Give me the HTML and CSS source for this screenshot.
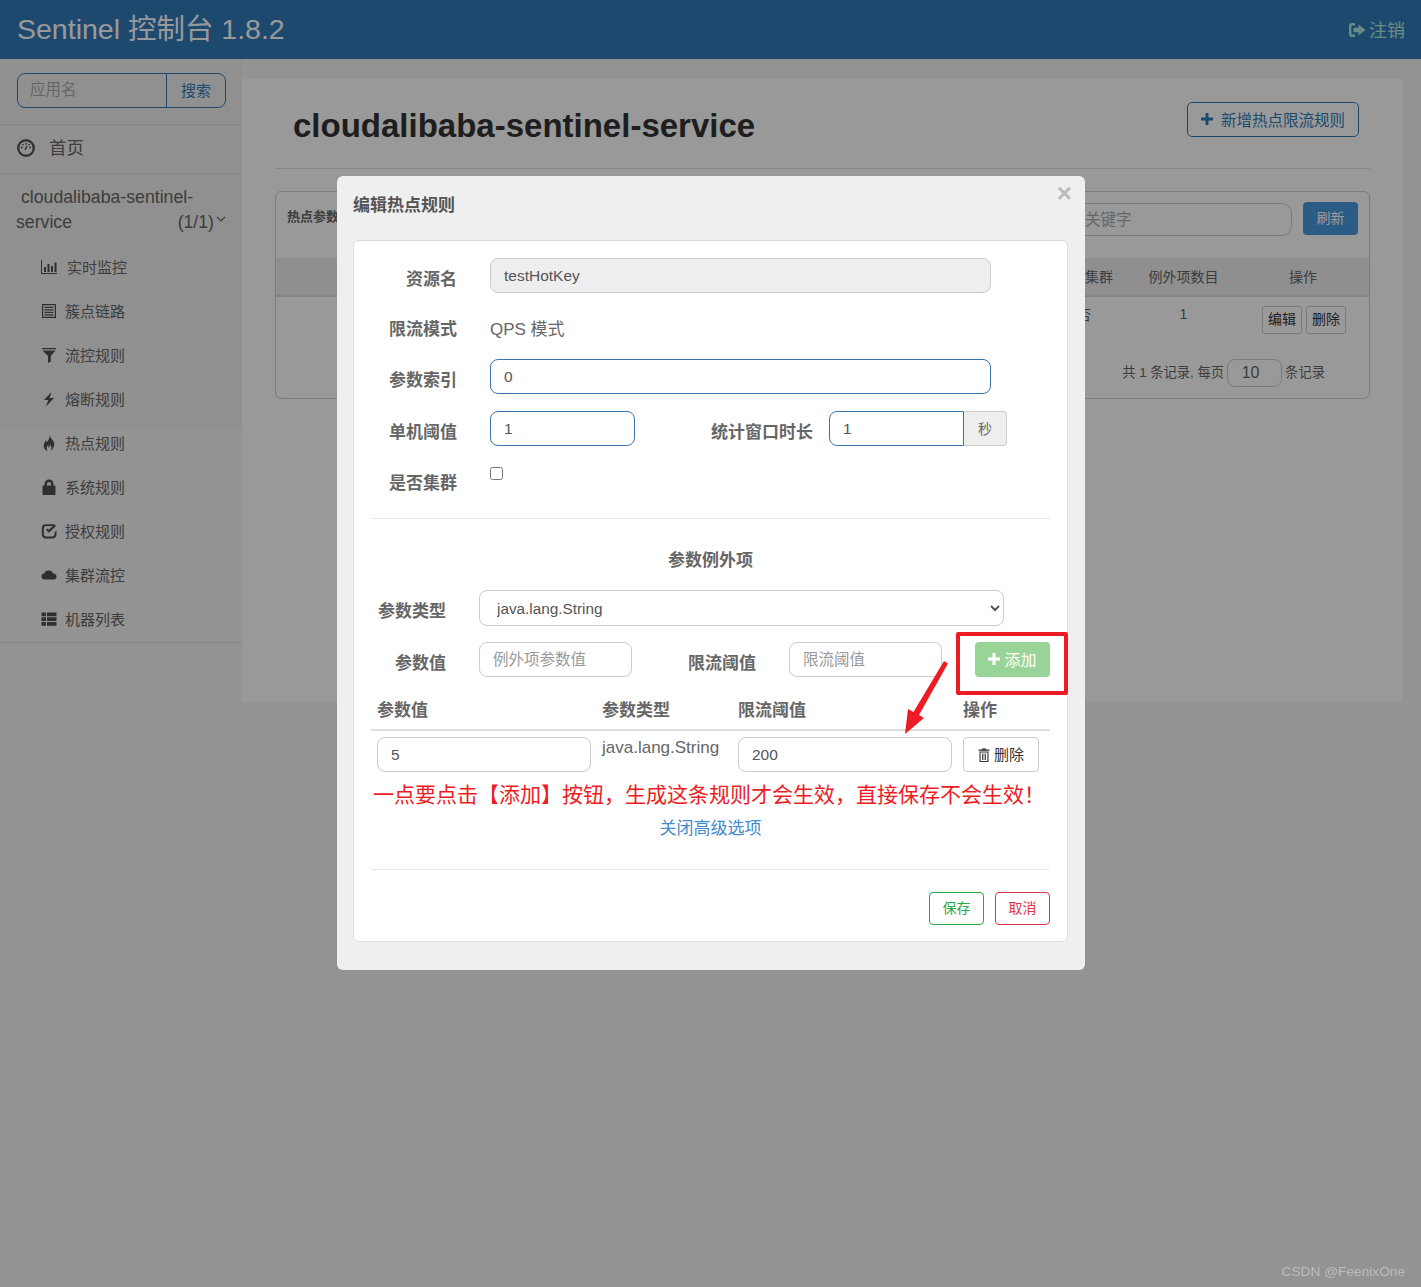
FILE: index.html
```html
<!DOCTYPE html>
<html lang="zh">
<head>
<meta charset="utf-8">
<title>Sentinel 控制台</title>
<link rel="stylesheet" href="styles.css">
</head>
<body>
<header class="topbar">
  <div class="brand">Sentinel 控制台 1.8.2</div>
  <a class="logout"><svg class="ico-logout" viewBox="0 0 18 16"><path d="M7 1H4a3 3 0 0 0-3 3v8a3 3 0 0 0 3 3h3v-2.400H4.400a1 1 0 0 1-1-1V4.400a1 1 0 0 1 1-1H7z"/><path d="M10.500 2.500 17.500 8l-7 5.500V10.300H5.500V5.700h5z"/></svg>注销</a>
</header>
<div class="layout">
  <aside class="sidebar">
    <div class="side-search">
      <div class="search-group"><input class="search-input" placeholder="应用名"><span class="search-btn">搜索</span></div>
    </div>
    <div class="side-home">
      <svg class="ico-home" viewBox="0 0 18 18"><circle cx="9" cy="9" r="7.800" fill="none" stroke="currentColor" stroke-width="2.400"/><path d="M4 8.500h1.800M12.200 8.500H14M9 4v1.800M5.500 5.200l1 1M12.500 5.200l-1 1M8.200 11l1.600-4" stroke="currentColor" stroke-width="1.500" fill="none"/></svg>
      <span class="home-text">首页</span>
    </div>
    <div class="side-app">
      <div class="app-line1">cloudalibaba-sentinel-</div>
      <div class="app-line2"><span>service</span><span class="app-count">(1/1)<svg class="ico-chev" viewBox="0 0 10 6"><path d="M1 1l4 4 4-4" fill="none" stroke="currentColor" stroke-width="1.200"/></svg></span></div>
    </div>
    <ul class="side-menu">
      <li><svg class="ico" viewBox="0 0 16 16"><path d="M0 1h1v13h16v1H0z"/><path d="M3 8h2v5H3zM6.500 5h2v8h-2zM10 7h2v6h-2zM13.500 3.500h2V13h-2z"/></svg><span class="lbl-first">实时监控</span></li>
      <li><svg class="ico" viewBox="0 0 16 16"><path fill-rule="evenodd" d="M1 1h14v14H1zM2.200 2.200v11.600h11.600V2.200z"/><path d="M3.500 3.800h9v1.300h-9zM3.500 6.300h9v1.300h-9zM3.500 8.800h9v1.300h-9zM3.500 11.200h9v1.300h-9z"/></svg><span>簇点链路</span></li>
      <li><svg class="ico" viewBox="0 0 16 16"><path d="M1 1h14v1.200H1zM1.500 3.500h13L9.800 9v5.500L7 16V9z"/></svg><span>流控规则</span></li>
      <li><svg class="ico" viewBox="0 0 16 16"><path d="M10.500 1 3 9h4.300L5 15.500 13 7H8.500z"/></svg><span>熔断规则</span></li>
      <li><svg class="ico" viewBox="0 0 16 16"><path d="M8.500 0c.5 3 3.500 4.500 4.500 7.500.8 2.800-.5 6.500-3.500 8.500 1.500-2.500 1.300-4.500-.3-6.500-.2 1.800-1 2.600-1.700 3.300-.5-1-.3-2 .3-3.300C6.200 10.500 5 12.500 6.500 16 3.500 14.500 2 12 3 9c.7-2 1.500-2.500 2-4 .5.800.7 1.500.7 2.300C7.500 5.500 9 3 8.500 0z"/></svg><span>热点规则</span></li>
      <li><svg class="ico" viewBox="0 0 16 16"><path fill-rule="evenodd" d="M3.500 6.500V5a4.500 4.500 0 0 1 9 0v1.500h1a1 1 0 0 1 1 1V15a1 1 0 0 1-1 1h-11a1 1 0 0 1-1-1V7.500a1 1 0 0 1 1-1zM6 6.500h4V5a2 2 0 0 0-4 0z"/></svg><span>系统规则</span></li>
      <li><svg class="ico" viewBox="0 0 16 16"><path d="M13.500 9.500V11a2.500 2.500 0 0 1-2.500 2.500H5A2.500 2.500 0 0 1 2.800 11V5A2.500 2.500 0 0 1 5 3h7L14 1.200H5A4 4 0 0 0 .8 5v6A4 4 0 0 0 5 15.500h6a4 4 0 0 0 4.500-4V7.500z"/><path d="M5 7 7.800 9.800 15 3 13.500 1.500 7.800 6.800 6.500 5.500z"/></svg><span>授权规则</span></li>
      <li><svg class="ico" viewBox="0 0 16 16"><path d="M3.500 12.500A3 3 0 0 1 .5 9.500a3 3 0 0 1 2.800-2.900A4.300 4.300 0 0 1 8 3.500a4.200 4.200 0 0 1 4 3A3 3 0 0 1 15.500 9.500a3 3 0 0 1-3 3z"/></svg><span>集群流控</span></li>
      <li><svg class="ico" viewBox="0 0 16 16"><path d="M.5 1.500h4.500v3.700H.5zM6 1.500h9.500v3.700H6zM.5 6.200h4.500v3.700H.5zM6 6.200h9.500v3.700H6zM.5 11h4.500v3.700H.5zM6 11h9.500v3.700H6z"/></svg><span>机器列表</span></li>
    </ul>
  </aside>
  <main class="main">
    <div class="page-head">
      <h1 class="page-title">cloudalibaba-sentinel-service</h1>
      <a class="btn-outline-primary"><svg class="ico-plus" viewBox="0 0 12 12"><path d="M4.500 0h3v4.500H12v3H7.500V12h-3V7.500H0v-3h4.500z"/></svg>新增热点限流规则</a>
    </div>
    <section class="rule-card">
      <div class="rule-top">
        <strong class="rule-title">热点参数规则</strong>
        <input class="rule-search" placeholder="关键字">
        <a class="btn-refresh">刷新</a>
      </div>
      <div class="rule-grid rule-head">
        <span></span><span>集群</span><span>例外项数目</span><span>操作</span>
      </div>
      <div class="rule-grid rule-row">
        <span></span><span class="cell-no">否</span><span class="cell-num">1</span>
        <span class="cell-ops"><a class="btn-mini">编辑</a><a class="btn-mini">删除</a></span>
      </div>
      <div class="rule-pager">
        <span>共 1 条记录, 每页</span><input class="pager-input" value="10"><span>条记录</span>
      </div>
    </section>
  </main>
</div>

<div class="backdrop"></div>

<div class="modal">
  <button class="modal-close">×</button>
  <h3 class="modal-title">编辑热点规则</h3>
  <div class="modal-card">
    <form class="form">
      <div class="row">
        <label class="lbl">资源名</label>
        <input class="fc fc-wide fc-disabled" value="testHotKey" disabled>
      </div>
      <div class="row row-static">
        <label class="lbl">限流模式</label>
        <span class="static">QPS 模式</span>
      </div>
      <div class="row row-index">
        <label class="lbl">参数索引</label>
        <input class="fc fc-wide fc-focus" value="0">
      </div>
      <div class="row">
        <label class="lbl">单机阈值</label>
        <input class="fc fc-short fc-focus" value="1">
        <label class="lbl lbl-window">统计窗口时长</label>
        <div class="input-group"><input class="fc fc-addon fc-focus" value="1"><span class="addon">秒</span></div>
      </div>
      <div class="row row-check">
        <label class="lbl">是否集群</label>
        <input class="check" type="checkbox">
      </div>
      <hr class="divider">
      <div class="section-title">参数例外项</div>
      <div class="row row-sel">
        <label class="lbl lbl-sm">参数类型</label>
        <select class="sel"><option>java.lang.String</option></select>
      </div>
      <div class="row row-add">
        <label class="lbl lbl-sm">参数值</label>
        <input class="fc fc-param" placeholder="例外项参数值">
        <label class="lbl lbl-limit">限流阈值</label>
        <input class="fc fc-param" placeholder="限流阈值">
        <a class="btn-add"><svg class="ico-plus-w" viewBox="0 0 12 12"><path d="M4.500 0h3v4.500H12v3H7.500V12h-3V7.500H0v-3h4.500z"/></svg>添加</a>
      </div>
      <div class="ex-grid ex-head"><span>参数值</span><span>参数类型</span><span>限流阈值</span><span>操作</span></div>
      <div class="ex-grid ex-row">
        <input class="fc fc-cell" value="5">
        <span class="ex-type">java.lang.String</span>
        <input class="fc fc-cell" value="200">
        <a class="btn-del"><svg class="ico-trash" viewBox="0 0 12 14"><path d="M4 1.500V.6h4v.9h3.500v1.200H.5V1.500zM1.500 3.500h9V14h-9zM2.600 4.600v8.300h6.800V4.600z" fill-rule="evenodd"/><path d="M4 5.500h.8v6.500H4zM5.600 5.500h.8v6.500h-.8zM7.200 5.500h.8v6.500h-.8z"/></svg>删除</a>
      </div>
      <p class="note">一点要点击【添加】按钮，生成这条规则才会生效，直接保存不会生效！</p>
      <a class="toggle">关闭高级选项</a>
      <hr class="divider divider-foot">
      <div class="foot">
        <a class="btn-save">保存</a>
        <a class="btn-cancel">取消</a>
      </div>
    </form>
  </div>
</div>

<div class="mark-box"></div>
<svg class="mark-arrow" viewBox="0 0 50 80"><path d="M42 2 46 4.500 17 56 22 59 3 75 6 50 11.500 53z"/></svg>
<div class="watermark">CSDN @FeenixOne</div>
</body>
</html>
```

FILE: styles.css
```css
* { box-sizing: border-box; }
html, body { margin: 0; padding: 0; height: 1287px; overflow: hidden; }
body {
  background: #f5f5f5;
  color: #666;
  font-family: "Liberation Sans", "Noto Sans CJK SC", sans-serif;
  font-size: 14px;
}
input, select, button { font-family: inherit; }
a { text-decoration: none; }
ul { list-style: none; margin: 0; padding: 0; }

/* top bar */
.topbar {
  height: 59px;
  background: #327bb9;
  display: flex;
  align-items: center;
  justify-content: space-between;
  padding: 0 16px 0 17px;
}
.brand { color: #fff; font-size: 28.500px; position: relative; top: -3px; }
.logout { color: #aee8dc; font-size: 18px; display: flex; align-items: center; position: relative; top: -1px; }
.ico-logout { width: 18px; height: 16px; fill: #aee8dc; margin-right: 3px; position: relative; top: 1px; }

/* layout */
.layout { display: flex; align-items: flex-start; }
.sidebar { width: 242px; flex: none; background: linear-gradient(#f1f1f1 370px, #f5f5f5 370px); }
.side-search { height: 66px; padding: 14px 16px 0 17px; border-bottom: 1px solid #e2e2e2; }
.search-group {
  display: flex; height: 35px;
  border: 1px solid #327bb9; border-radius: 8px; overflow: hidden;
}
.search-input {
  flex: 1; min-width: 0; border: 0; outline: 0; background: transparent;
  padding: 0 12px 1px; font-size: 15.500px; color: #666;
}
.search-input::placeholder { color: #aaa; }
.search-btn {
  width: 59px; border-left: 1px solid #327bb9; color: #327bb9; padding-bottom: 2px;
  font-size: 15px; display: flex; align-items: center; justify-content: center;
}
.side-home {
  height: 49px; display: flex; align-items: center; padding-left: 17px;
  font-size: 17.500px; border-bottom: 1px solid #e2e2e2; color: #666;
}
.home-text { padding-bottom: 5px; }
.ico-home { width: 18px; height: 18px; margin-right: 14px; color: #555; position: relative; top: -1px; }
.side-app { height: 71px; padding: 11px 16px 0; font-size: 17.700px; line-height: 25px; color: #666; }
.app-line1 { padding-left: 5px; }
.app-line2 { display: flex; justify-content: space-between; }
.app-count { display: flex; align-items: center; }
.ico-chev { width: 10px; height: 6px; margin-left: 2px; margin-top: -8px; }
.side-menu { border-bottom: 1px solid #e2e2e2; padding-bottom: 1px; }
.side-menu li { height: 44px; display: flex; align-items: center; padding-left: 41px; font-size: 15px; color: #666; }
.side-menu li span { margin-left: 8px; padding-bottom: 2px; }
.side-menu li .lbl-first { margin-left: 10px; }
.ico { width: 16px; height: 16px; fill: #4f4f4f; flex: none; }

/* main */
.main {
  width: 1161px; height: 623px; margin-top: 20px;
  background: #fff; padding: 0 33px;
}
.page-head {
  height: 90px; border-bottom: 1px solid #e2e2e2;
  display: flex; align-items: flex-start; justify-content: space-between;
  padding: 23px 11px 0 18px;
}
.page-title { margin: 1px 0 0; font-size: 33px; line-height: 46px; color: #333; font-weight: 700; }
.btn-outline-primary {
  width: 172px; height: 35px; border: 1px solid #327bb9; border-radius: 5px; padding-bottom: 1px;
  display: flex; align-items: center; justify-content: center;
  color: #327bb9; font-size: 15.500px;
}
.ico-plus { width: 12px; height: 12px; fill: #327bb9; margin-right: 8px; }
.rule-card {
  margin-top: 22px; height: 208px; border: 1px solid #d0d0d0; border-radius: 6px;
}
.rule-top { height: 66px; display: flex; align-items: flex-start; padding: 10px 11px 0; }
.rule-title { font-size: 13px; margin-top: 4px; color: #666; }
.rule-search {
  margin-left: auto; width: 221px; height: 33px; margin-top: 1px;
  border: 1px solid #ccc; border-radius: 10px; outline: 0; background: transparent;
  font-size: 15.500px; padding: 0 12px 0 13px;
}
.rule-search::placeholder { color: #aaa; }
.btn-refresh {
  width: 55px; height: 33px; margin-left: 11px; background: #499ae0; color: #fff; padding-bottom: 3px;
  border-radius: 4px; font-size: 14px;
  display: flex; align-items: center; justify-content: center;
}
.rule-grid { display: grid; grid-template-columns: 1fr 62px 107px 132px; text-align: center; }
.rule-head {
  height: 39px; background: #eee; border-bottom: 2px solid #ddd; align-items: center; color: #666; padding-bottom: 2px;
}
.rule-row { height: 55px; padding-top: 9px; align-items: start; color: #666; }
.cell-no { padding-right: 30px; margin-top: -2px; }
.cell-ops { display: flex; gap: 4px; padding-left: 25px; }
.btn-mini {
  height: 28px; padding: 0 5px 4px; border: 1px solid #ccc; border-radius: 3px; color: #333;
  font-size: 14px; display: flex; align-items: center; margin-top: 0;
}
.cell-num { margin-top: 0; }
.rule-pager {
  display: flex; align-items: center; justify-content: flex-end; gap: 3px;
  padding-right: 44px; color: #666; font-size: 13.300px; margin-top: 7px;
}
.rule-pager span { padding-bottom: 3px; }
.pager-input {
  width: 55px; height: 28px; border: 1px solid #ccc; border-radius: 8px; outline: 0;
  background: transparent; text-align: center; font-size: 16px; color: #666; padding: 0 8px 0 0;
}

/* overlay */
.backdrop { position: fixed; inset: 0; background: rgba(0, 0, 0, .4); }
.modal {
  position: fixed; left: 337px; top: 176px; width: 748px; height: 794px;
  background: #efefef; border-radius: 6px; padding: 0 17px 0 16px;
}
.modal-close {
  position: absolute; right: 13px; top: 3px; border: 0; background: none; padding: 0;
  font-size: 26px; line-height: 28px; font-weight: 700; color: #bbb;
}
.modal-title { margin: 0; height: 64px; padding-top: 19px; font-size: 17px; line-height: 22px; color: #555; font-weight: 700; }
.modal-card {
  height: 702px; background: #fff; border: 1px solid #ddd; border-radius: 6px;
  padding: 17px 17px 0;
}

/* form */
.row { display: flex; align-items: center; height: 35px; margin-bottom: 16px; }
.row-static { height: 34px; }
.row-index { margin-bottom: 17px; }
.lbl {
  width: 86px; flex: none; text-align: right; font-size: 17px; font-weight: 700;
  color: #666; padding-top: 3px; margin-right: 33px;
}
.fc {
  height: 35px; border: 1px solid #ccc; border-radius: 8px; outline: 0;
  padding: 0 13px; font-size: 15.500px; color: #555; background: #fff;
}
.fc::placeholder { color: #999; }
.fc-wide { width: 501px; }
.fc-short { width: 145px; }
.fc-focus { border-color: #3a74ad; }
.fc-disabled { background: #eee; }
.static { font-size: 17px; color: #666; padding-top: 3px; }
.lbl-window { width: auto; margin-left: 76px; margin-right: 16px; }
.input-group { display: flex; }
.fc-addon { width: 135px; border-radius: 8px 0 0 8px; }
.addon {
  width: 43px; height: 35px; background: #eee; border: 1px solid #ccc; border-left: 0;
  border-radius: 0 4px 4px 0; display: flex; align-items: center; justify-content: center;
  font-size: 14px; color: #666; padding-bottom: 2px;
}
.row-check { height: 35px; margin-bottom: 0; margin-top: 0; align-items: flex-start; }
.row-check .lbl { padding-top: 10px; line-height: 24px; }
.check { width: 13px; height: 13px; margin: 5px 0 0; }
.divider { border: 0; border-top: 1px solid #e6e6e6; margin: 21px 0 0; }
.section-title { text-align: center; font-size: 17px; font-weight: 700; color: #666; line-height: 22px; margin-top: 31px; }
.lbl-sm { width: 75px; margin-right: 33px; }
.row-sel { height: 36px; margin-top: 18px; margin-bottom: 16px; }
.sel {
  width: 525px; height: 36px; border: 1px solid #ccc; border-radius: 8px; background: #fff;
  font-size: 15.300px; color: #555; padding: 0 13px; outline: 0;
}
.row-add { margin-bottom: 0; }
.fc-param { width: 153px; }
.lbl-limit { width: auto; margin-left: 56px; margin-right: 33px; }
.btn-add {
  width: 76px; height: 35px; margin-left: 33px; background: #98d498; color: #fff; border-radius: 4px;
  font-size: 16px; display: flex; align-items: center; justify-content: center; padding-bottom: 1px;
}
.ico-plus-w { width: 12px; height: 12px; fill: #fff; margin-right: 4px; }
.ex-grid { display: grid; grid-template-columns: 225px 136px 225px 76px; padding-left: 6px; }
.ex-head {
  height: 54px; border-bottom: 2px solid #ddd; align-items: end; padding-bottom: 7px;
  font-size: 17px; font-weight: 700; color: #666; line-height: 22px;
}
.ex-row { margin-top: 6px; height: 35px; }
.fc-cell { width: 214px; }
.ex-type { font-size: 17px; color: #666; line-height: 22px; }
.btn-del {
  width: 76px; height: 35px; border: 1px solid #ccc; border-radius: 4px; color: #333; padding-bottom: 2px;
  font-size: 15px; display: flex; align-items: center; justify-content: center;
}
.ico-trash { width: 12px; height: 14px; fill: #333; margin-right: 4px; position: relative; top: 1px; }
.note {
  margin: 8px 0 0 2px; font-size: 21px; line-height: 30px; color: #ed1c24; white-space: nowrap;
}
.toggle { display: block; text-align: center; font-size: 17px; line-height: 24px; color: #428bca; margin-top: 7px; }
.divider-foot { margin-top: 28px; }
.foot { display: flex; justify-content: flex-end; gap: 11px; margin-top: 22px; }
.btn-save, .btn-cancel {
  width: 55px; height: 33px; border-radius: 4px; font-size: 14px; padding-bottom: 3px;
  display: flex; align-items: center; justify-content: center;
}
.btn-save { border: 1px solid #28a745; color: #28a745; }
.btn-cancel { border: 1px solid #dc3545; color: #dc3545; }

/* annotations drawn over the screenshot */
.mark-box {
  position: fixed; left: 956px; top: 632px; width: 112px; height: 63px;
  border: 4px solid #ed1c24; border-radius: 2px;
}
.mark-arrow { position: fixed; left: 902px; top: 659px; width: 50px; height: 80px; fill: #ed1c24; }
.watermark { position: fixed; right: 16px; bottom: 8px; font-size: 13.700px; color: #bdbdbd; }
```
